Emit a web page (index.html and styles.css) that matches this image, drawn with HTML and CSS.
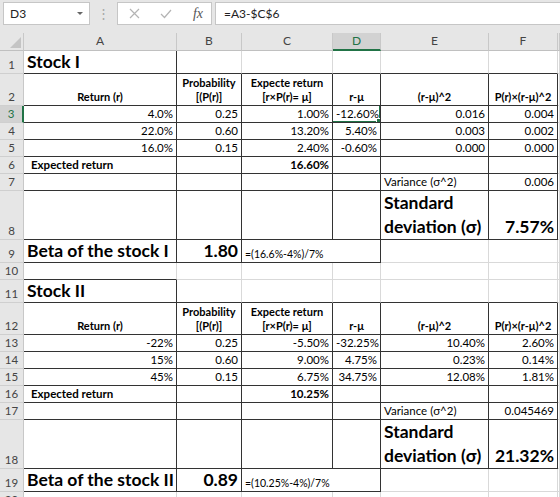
FILE: index.html
```html
<!DOCTYPE html>
<html lang="en">
<head>
  <meta charset="UTF-8" />
  <title>Stock I / Stock II</title>
  <link rel="stylesheet" href="styles.css">
</head>
<body>
  <!-- formula bar -->
  <div class="formula-bar">
    <div class="name-box"><span>D3</span><span class="caret"></span></div>
    <div class="grip">⋮</div>
    <div class="fx-box">
      <svg width="11" height="11" viewBox="0 0 11 11"><path d="M1 1 L10 10 M10 1 L1 10" stroke="#b4b4b4" stroke-width="1.2" fill="none"/></svg>
      <svg width="12" height="10" viewBox="0 0 12 10"><path d="M1 5 L4.5 8.5 L11 1" stroke="#b4b4b4" stroke-width="1.2" fill="none"/></svg>
      <span class="fx">fx</span>
    </div>
    <div class="formula">=A3-$C$6</div>
  </div>

  <table class="sheet">
    <colgroup>
      <col style="width:24px"><col style="width:153px"><col style="width:65px"><col style="width:91px">
      <col style="width:48px"><col style="width:108px"><col style="width:69px"><col>
    </colgroup>

    <tr class="hdr">
      <th class="corner"><span></span></th>
      <th>A</th><th>B</th><th>C</th><th class="sel">D</th><th>E</th><th>F</th><th></th>
    </tr>

    <!-- Stock I -->
    <tr class="h-title">
      <th>1</th>
      <td class="title dr db">Stock I</td><td class="db"></td><td class="db"></td><td class="db"></td><td class="db"></td><td class="db"></td><td></td>
    </tr>
    <tr class="h-head">
      <th>2</th>
      <td class="head dr db">Return (r)</td>
      <td class="head dr db">Probability<br>[(P(r)]</td>
      <td class="head dr db">Expecte return<br>[r×P(r)= μ]</td>
      <td class="head dr db">r-μ</td>
      <td class="head dr db">(r-μ)^2</td>
      <td class="head dr db">P(r)×(r-μ)^2</td>
      <td></td>
    </tr>
    <tr>
      <th class="sel">3</th>
      <td class="num dr db">4.0%</td><td class="num dr db">0.25</td><td class="num dr db">1.00%</td>
      <td class="num dr db active">-12.60%</td><td class="num dr db">0.016</td><td class="num dr db">0.004</td><td></td>
    </tr>
    <tr>
      <th>4</th>
      <td class="num dr db">22.0%</td><td class="num dr db">0.60</td><td class="num dr db">13.20%</td>
      <td class="num dr db">5.40%</td><td class="num dr db">0.003</td><td class="num dr db">0.002</td><td></td>
    </tr>
    <tr>
      <th>5</th>
      <td class="num dr db">16.0%</td><td class="num dr db">0.15</td><td class="num dr db">2.40%</td>
      <td class="num dr db">-0.60%</td><td class="num dr db">0.000</td><td class="num dr db">0.000</td><td></td>
    </tr>
    <tr>
      <th>6</th>
      <td class="label dr db">Expected return</td><td class="dr db"></td><td class="num strong dr db">16.60%</td>
      <td class="dr db"></td><td class="dr db"></td><td class="dr db"></td><td></td>
    </tr>
    <tr>
      <th>7</th>
      <td class="dr db"></td><td class="dr db"></td><td class="dr db"></td><td class="dr db"></td>
      <td class="dr db">Variance (σ^2)</td><td class="num dr db">0.006</td><td></td>
    </tr>
    <tr class="h-big">
      <th>8</th>
      <td class="dr db"></td><td class="dr db"></td><td class="dr db"></td><td class="dr db"></td>
      <td class="big dr db">Standard<br>deviation (σ)</td><td class="big num dr db">7.57%</td><td></td>
    </tr>
    <tr class="h-title">
      <th>9</th>
      <td class="title dr db">Beta of the stock I</td><td class="title num dr db">1.80</td>
      <td class="note dr db" colspan="2">=(16.6%-4%)/7%</td><td></td><td></td><td></td>
    </tr>
    <tr>
      <th>10</th>
      <td class="db"></td><td></td><td></td><td></td><td></td><td></td><td></td>
    </tr>

    <!-- Stock II -->
    <tr class="h-title">
      <th>11</th>
      <td class="title dr db">Stock II</td><td class="db"></td><td class="db"></td><td class="db"></td><td class="db"></td><td class="db"></td><td></td>
    </tr>
    <tr class="h-head">
      <th>12</th>
      <td class="head dr db">Return (r)</td>
      <td class="head dr db">Probability<br>[(P(r)]</td>
      <td class="head dr db">Expecte return<br>[r×P(r)= μ]</td>
      <td class="head dr db">r-μ</td>
      <td class="head dr db">(r-μ)^2</td>
      <td class="head dr db">P(r)×(r-μ)^2</td>
      <td></td>
    </tr>
    <tr>
      <th>13</th>
      <td class="num dr db">-22%</td><td class="num dr db">0.25</td><td class="num dr db">-5.50%</td>
      <td class="num dr db">-32.25%</td><td class="num dr db">10.40%</td><td class="num dr db">2.60%</td><td></td>
    </tr>
    <tr>
      <th>14</th>
      <td class="num dr db">15%</td><td class="num dr db">0.60</td><td class="num dr db">9.00%</td>
      <td class="num dr db">4.75%</td><td class="num dr db">0.23%</td><td class="num dr db">0.14%</td><td></td>
    </tr>
    <tr>
      <th>15</th>
      <td class="num dr db">45%</td><td class="num dr db">0.15</td><td class="num dr db">6.75%</td>
      <td class="num dr db">34.75%</td><td class="num dr db">12.08%</td><td class="num dr db">1.81%</td><td></td>
    </tr>
    <tr>
      <th>16</th>
      <td class="label dr db">Expected return</td><td class="dr db"></td><td class="num strong dr db">10.25%</td>
      <td class="dr db"></td><td class="dr db"></td><td class="dr db"></td><td></td>
    </tr>
    <tr>
      <th>17</th>
      <td class="dr db"></td><td class="dr db"></td><td class="dr db"></td><td class="dr db"></td>
      <td class="dr db">Variance (σ^2)</td><td class="num dr db">0.045469</td><td></td>
    </tr>
    <tr class="h-big">
      <th>18</th>
      <td class="dr db"></td><td class="dr db"></td><td class="dr db"></td><td class="dr db"></td>
      <td class="big dr db">Standard<br>deviation (σ)</td><td class="big num dr db">21.32%</td><td></td>
    </tr>
    <tr class="h-title">
      <th>19</th>
      <td class="title dr db">Beta of the stock II</td><td class="title num dr db">0.89</td>
      <td class="note dr db" colspan="2">=(10.25%-4%)/7%</td><td></td><td></td><td></td>
    </tr>
    <tr>
      <th>20</th>
      <td></td><td></td><td></td><td></td><td></td><td></td><td></td>
    </tr>
  </table>
</body>
</html>
```

FILE: styles.css
```css
body {
  margin: 0;
  background: #fff;
  font-family: Lato, "Liberation Sans", sans-serif;
  overflow: hidden;
}

/* ---- formula bar ---- */
.formula-bar {
  display: flex;
  align-items: flex-start;
  height: 33px;
  padding: 2px 0 0 3px;
  box-sizing: border-box;
  background: #e6e6e6;
}

.name-box,
.fx-box,
.formula {
  height: 23px;
  box-sizing: border-box;
  background: #fff;
  border: 1px solid #c6c6c6;
  display: flex;
  align-items: center;
  font-size: 12px;
  color: #222;
}

.name-box {
  width: 87px;
  padding: 0 6px 0 6px;
  justify-content: space-between;
}

.caret {
  width: 0;
  height: 0;
  border-left: 3px solid transparent;
  border-right: 3px solid transparent;
  border-top: 3px solid #666;
}

.grip {
  width: 27px;
  text-align: center;
  color: #a6a6a6;
  font-size: 13px;
  line-height: 23px;
}

.fx-box {
  width: 95px;
  padding: 0 8px 0 11px;
  justify-content: space-between;
}

.fx {
  font-family: "Liberation Serif", serif;
  font-style: italic;
  font-size: 14px;
  color: #555;
}

.formula {
  flex: 1;
  margin-left: 3px;
  padding-left: 8px;
  border-right: none;
}

/* ---- sheet ---- */
.sheet {
  table-layout: fixed;
  width: 560px;
  border-collapse: separate;
  border-spacing: 0;
  font-size: 11.5px;
  color: #000;
}

.sheet td,
.sheet th {
  box-sizing: border-box;
  border-right: 1px solid #d9d9d9;
  border-bottom: 1px solid #d9d9d9;
  padding: 0 3px 1px;
  vertical-align: bottom;
  white-space: nowrap;
  overflow: hidden;
  line-height: 14px;
}

.sheet tr {
  height: 17px;
}

.sheet th {
  background: #e6e6e6;
  font-weight: normal;
  color: #444;
  text-align: center;
  padding: 0 0 1px;
  font-size: 11.5px;
  border-right-color: #c8c8c8;
  border-bottom-color: #cfcfcf;
}

.sheet .hdr {
  height: 18px;
}

.hdr th {
  vertical-align: middle;
  font-size: 12px;
  border-bottom-color: #c0c0c0;
}

.corner {
  position: relative;
}

.corner span {
  position: absolute;
  right: 2px;
  bottom: 2px;
  width: 0;
  height: 0;
  border-left: 11px solid transparent;
  border-bottom: 11px solid #c4c4c4;
}

.sheet th.sel {
  background: #d2d2d2;
  color: #217346;
}

.hdr th.sel {
  border-bottom: 2px solid #217346;
}

tr th.sel:first-child {
  border-right: 2px solid #217346;
}

.sheet .h-title { height: 23px; }
.sheet .h-head { height: 32px; }
.sheet .h-big { height: 46px; }

/* borders */
.dr { border-right-color: #333 !important; }
.db { border-bottom-color: #333 !important; }

/* cell kinds */
.num { text-align: right; }

.sheet .head {
  text-align: center;
  font-weight: bold;
  font-size: 11px;
  line-height: 14px;
}

.sheet .label {
  font-weight: bold;
  padding-left: 7px;
}

.strong { font-weight: bold; }

.sheet .title {
  font-weight: bold;
  font-size: 17.5px;
  line-height: 21px;
}

.sheet .big {
  font-weight: bold;
  font-size: 17.5px;
  line-height: 24px;
  padding-bottom: 0;
}

.note {
  font-size: 10.5px;
}

.active {
  position: relative;
}

.active::after {
  content: '';
  position: absolute;
  left: -2px;
  top: -2px;
  right: -1px;
  bottom: -1px;
  border: 2px solid #217346;
}

.active::before {
  content: '';
  position: absolute;
  right: -3px;
  bottom: -3px;
  width: 5px;
  height: 5px;
  background: #217346;
  border: 1px solid #fff;
  z-index: 1;
}
```
